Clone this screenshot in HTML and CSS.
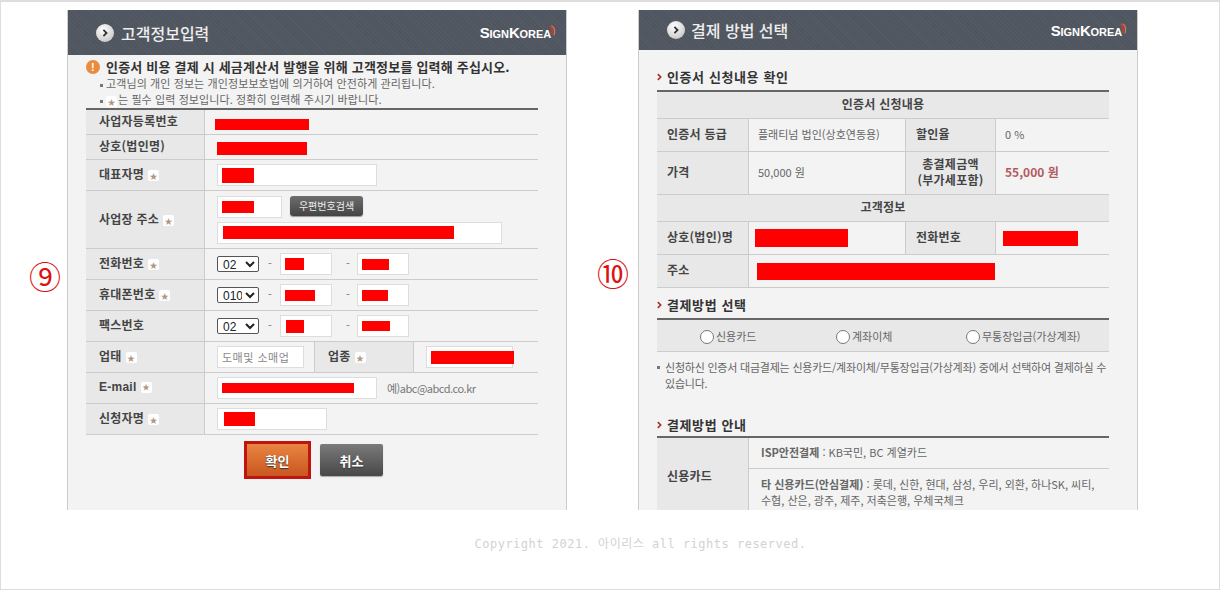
FILE: index.html
```html
<!DOCTYPE html>
<html lang="ko">
<head>
  <meta charset="UTF-8" />
  <title>고객정보입력 / 결제 방법 선택</title>
  <link rel="stylesheet" href="styles.css">
</head>
<body>
  <svg class="defs" width="0" height="0">
    <defs>
      <radialGradient id="knob" cx="40%" cy="30%" r="80%">
        <stop offset="0" stop-color="#ffffff"/>
        <stop offset="1" stop-color="#c4c4c4"/>
      </radialGradient>
      <symbol id="go" viewBox="0 0 18 18">
        <circle cx="9" cy="9" r="9" fill="url(#knob)"/>
        <path d="M7.4 5.8 10.6 9 7.4 12.2" fill="none" stroke="#333" stroke-width="1.8"/>
      </symbol>
      <symbol id="arc" viewBox="0 0 8 14">
        <path d="M0 1C4 2.5 5.5 6 4 12L2.6 11C3.6 7 2.6 3.6 0 2.4Z" fill="#c8402c"/>
        <path d="M3 1C7 3 8.5 7 6 13L5 12C6.6 7.5 5.4 3.6 2.4 1.8Z" fill="#e2705c"/>
      </symbol>
      <symbol id="chev" viewBox="0 0 6 9">
        <path d="M1 1 4.4 4.5 1 8" fill="none" stroke="#a5332f" stroke-width="2"/>
      </symbol>
    </defs>
  </svg>

  <div class="page">
    <div class="steps">
      <div class="step-no">⑨</div>

      <section class="panel">
        <header class="panel-head">
          <svg class="go"><use href="#go"/></svg>
          <h2>고객정보입력</h2>
          <div class="logo">SignKorea<svg class="arc"><use href="#arc"/></svg></div>
        </header>

        <div class="body-left">
          <div class="notice">
            <p class="notice-title"><span class="warn">!</span>인증서 비용 결제 시 세금계산서 발행을 위해 고객정보를 입력해 주십시오.</p>
            <p class="notice-line"><i class="dot"></i>고객님의 개인 정보는 개인정보보호법에 의거하여 안전하게 관리됩니다.</p>
            <p class="notice-line"><i class="dot"></i><span class="star">★</span>는 필수 입력 정보입니다. 정확히 입력해 주시기 바랍니다.</p>
          </div>

          <table class="form-table">
            <colgroup>
              <col class="c-label"><col class="c-biz"><col class="c-label2"><col>
            </colgroup>
            <tr class="h25">
              <th>사업자등록번호</th>
              <td colspan="3"><i class="red r-a"></i></td>
            </tr>
            <tr class="h25">
              <th>상호(법인명)</th>
              <td colspan="3"><i class="red r-b"></i></td>
            </tr>
            <tr>
              <th>대표자명<span class="star">★</span></th>
              <td colspan="3"><div class="field w160"><i class="red r-c"></i></div></td>
            </tr>
            <tr class="h58">
              <th>사업장 주소<span class="star">★</span></th>
              <td colspan="3">
                <div class="addr">
                  <div class="addr-top">
                    <div class="field w65"><i class="red r-d"></i></div>
                    <button class="zip-btn" type="button">우편번호검색</button>
                  </div>
                  <div class="field w285"><i class="red r-e"></i></div>
                </div>
              </td>
            </tr>
            <tr>
              <th>전화번호<span class="star">★</span></th>
              <td colspan="3">
                <div class="phone">
                  <select><option>02</option></select><span class="dash">-</span>
                  <div class="field w52"><i class="red r-f"></i></div><span class="dash d2">-</span>
                  <div class="field w52"><i class="red r-g"></i></div>
                </div>
              </td>
            </tr>
            <tr>
              <th>휴대폰번호<span class="star">★</span></th>
              <td colspan="3">
                <div class="phone">
                  <select><option>010</option></select><span class="dash">-</span>
                  <div class="field w52"><i class="red r-h"></i></div><span class="dash d2">-</span>
                  <div class="field w52"><i class="red r-i"></i></div>
                </div>
              </td>
            </tr>
            <tr>
              <th>팩스번호</th>
              <td colspan="3">
                <div class="phone">
                  <select><option>02</option></select><span class="dash">-</span>
                  <div class="field w52"><i class="red r-j"></i></div><span class="dash d2">-</span>
                  <div class="field w52"><i class="red r-k"></i></div>
                </div>
              </td>
            </tr>
            <tr>
              <th>업태<span class="star">★</span></th>
              <td><div class="field w87 typed">도매및 소매업</div></td>
              <th class="th-mid">업종<span class="star">★</span></th>
              <td class="td-mid"><div class="field w87"><i class="red r-l"></i></div></td>
            </tr>
            <tr>
              <th class="latin">E-mail<span class="star">★</span></th>
              <td colspan="3">
                <div class="mail">
                  <div class="field w160"><i class="red r-m"></i></div>
                  <span class="hint">예)abc@abcd.co.kr</span>
                </div>
              </td>
            </tr>
            <tr>
              <th>신청자명<span class="star">★</span></th>
              <td colspan="3"><div class="field w110"><i class="red r-n"></i></div></td>
            </tr>
          </table>

          <div class="actions">
            <button class="btn btn-ok" type="button">확인</button>
            <button class="btn btn-cancel" type="button">취소</button>
          </div>
        </div>
      </section>

      <div class="step-no step-no2">⑩</div>

      <section class="panel">
        <header class="panel-head head-right">
          <svg class="go"><use href="#go"/></svg>
          <h2>결제 방법 선택</h2>
          <div class="logo">SignKorea<svg class="arc"><use href="#arc"/></svg></div>
        </header>

        <div class="body-right">
          <h3 class="sec first"><svg class="chev"><use href="#chev"/></svg>인증서 신청내용 확인</h3>
          <table class="info-table">
            <colgroup>
              <col class="i-a"><col class="i-b"><col class="i-c"><col>
            </colgroup>
            <tr class="h27"><th colspan="4" class="center">인증서 신청내용</th></tr>
            <tr class="h33">
              <th>인증서 등급</th><td>플래티넘 법인(상호연동용)</td>
              <th>할인율</th><td>0 %</td>
            </tr>
            <tr class="h43">
              <th>가격</th><td>50,000 원</td>
              <th class="center">총결제금액<br>(부가세포함)</th><td class="sum">55,000 원</td>
            </tr>
            <tr class="h27"><th colspan="4" class="center">고객정보</th></tr>
            <tr class="h33">
              <th>상호(법인)명</th><td class="tight"><i class="red r-o"></i></td>
              <th>전화번호</th><td class="tight"><i class="red r-p"></i></td>
            </tr>
            <tr class="h33">
              <th>주소</th><td colspan="3" class="tight"><i class="red r-q"></i></td>
            </tr>
          </table>

          <h3 class="sec second"><svg class="chev"><use href="#chev"/></svg>결제방법 선택</h3>
          <div class="pay-row">
            <label><input type="radio" name="pay">신용카드</label>
            <label><input type="radio" name="pay">계좌이체</label>
            <label><input type="radio" name="pay">무통장입금(가상계좌)</label>
          </div>
          <p class="pay-note">신청하신 인증서 대금결제는 신용카드/계좌이체/무통장입금(가상계좌) 중에서 선택하여 결제하실 수 있습니다.</p>

          <h3 class="sec third"><svg class="chev"><use href="#chev"/></svg>결제방법 안내</h3>
          <table class="guide-table">
            <colgroup><col class="i-a"><col></colgroup>
            <tr class="h31">
              <th rowspan="2">신용카드</th>
              <td class="one-line"><b>ISP안전결제</b> : KB국민, BC 계열카드</td>
            </tr>
            <tr>
              <td class="two-line">
                <div><b>타 신용카드(안심결제)</b> : 롯데, 신한, 현대, 삼성, 우리, 외환, 하나SK, 씨티,</div>
                <div>수협, 산은, 광주, 제주, 저축은행, 우체국체크</div>
              </td>
            </tr>
          </table>
        </div>
      </section>
    </div>

    <footer class="copy">Copyright 2021. 아이리스 all rights reserved.</footer>
  </div>
</body>
</html>
```

FILE: styles.css
```css
* {
  box-sizing: border-box;
}

html, body {
  margin: 0;
  height: 100%;
}

body {
  font-family: "Noto Sans CJK KR", "Liberation Sans", sans-serif;
  font-size: 11px;
  color: #666;
  background-color: #fff;
  overflow: hidden;
}

.defs {
  display: block;
}

.page {
  height: 590px;
  border: 1px solid #ddd;
  border-top-width: 2px;
  padding-top: 8px;
}

.steps {
  display: flex;
  padding-left: 26px;
}

.step-no {
  width: 40px;
  margin-top: 250px;
  padding-left: 2px;
  font-family: "Liberation Serif", "Noto Sans CJK KR", serif;
  font-size: 32px;
  line-height: 36px;
  color: #d11;
}

.step-no2 {
  width: 41px;
  margin-left: 30px;
  margin-top: 247px;
  padding-left: 0;
}

.panel {
  width: 500px;
  height: 500px;
  overflow: hidden;
  background-color: #f3f3f3;
  border-left: 1px solid #ccc;
  border-right: 1px solid #ccc;
}

.panel-head {
  display: flex;
  align-items: center;
  height: 45px;
  padding: 0 10px 0 28px;
  color: #eee;
  background-color: #50565f;
  background-image: repeating-linear-gradient(45deg, rgba(255, 255, 255, 0.03) 0 1px, transparent 1px 3px);
}

.head-right {
  height: 40px;
}

.panel-head h2 {
  flex: 1;
  margin: 0 0 0 7px;
  font-size: 16px;
  font-weight: 500;
  line-height: 20px;
}

.head-right h2 {
  margin-left: 6px;
}

.go {
  width: 18px;
  height: 18px;
}

.logo {
  display: flex;
  align-items: flex-start;
  font-family: "Liberation Sans", sans-serif;
  font-size: 15px;
  font-weight: bold;
  font-variant: small-caps;
  letter-spacing: -0.1px;
  line-height: 15px;
  color: #fff;
}

.arc {
  width: 7px;
  height: 13px;
  margin-left: -2px;
  margin-top: -1px;
}

/* left form */
.body-left {
  padding-left: 18px;
}

.notice {
  height: 53px;
  padding-top: 4px;
}

.notice p {
  margin: 0;
  line-height: 16px;
}

.notice-title {
  display: flex;
  align-items: center;
  font-size: 13px;
  font-weight: 700;
  letter-spacing: 0.2px;
  color: #333;
}

.warn {
  width: 14px;
  height: 14px;
  margin-right: 6px;
  border-radius: 50%;
  background-color: #e98c3f;
  color: #fff;
  font-family: "Liberation Sans", sans-serif;
  font-size: 11px;
  line-height: 14px;
  text-align: center;
}

.notice-line {
  padding-left: 14px;
  letter-spacing: 0.1px;
  color: #666;
}

.dot {
  display: inline-block;
  width: 3px;
  height: 3px;
  margin-right: 3px;
  vertical-align: middle;
  background-color: #777;
}

.star {
  display: inline-block;
  width: 11px;
  height: 11px;
  margin-left: 4px;
  border-radius: 2px;
  background-color: #fff;
  color: #b3947c;
  font-size: 8px;
  font-weight: 400;
  line-height: 11px;
  text-align: center;
  vertical-align: middle;
}

.notice-line .star {
  margin-left: 0;
  margin-right: 1px;
}

table {
  border-collapse: separate;
  border-spacing: 0;
  table-layout: fixed;
  width: 452px;
  border-top: 2px solid #666;
}

th, td {
  padding: 0;
  border-bottom: 1px solid #ccc;
  text-align: left;
  font-weight: 400;
}

th {
  background-color: #e8e8e8;
  color: #444;
  font-size: 12px;
  font-weight: 700;
  letter-spacing: 0.25px;
}

.form-table th {
  padding-left: 13px;
  padding-bottom: 3px;
}

.form-table tr {
  height: 31px;
}

.form-table tr.h25 {
  height: 25px;
}

.form-table tr.h58 {
  height: 58px;
}

.form-table td {
  padding-left: 12px;
  border-left: 1px solid #ccc;
}

.c-label {
  width: 118px;
}

.c-biz {
  width: 110px;
}

.c-label2 {
  width: 99px;
}

.form-table .th-mid {
  padding-left: 13px;
  border-left: 1px solid #ccc;
}

.form-table .td-mid {
  padding-left: 12px;
}

.latin {
  font-family: "Liberation Sans", sans-serif;
}

.field {
  display: flex;
  align-items: center;
  height: 22px;
  padding-left: 4px;
  background-color: #fff;
  border: 1px solid #ddd;
  color: #888;
  line-height: 20px;
}

.w52 { width: 52px; }
.w65 { width: 65px; }
.w87 { width: 87px; }
.w110 { width: 110px; }
.w160 { width: 160px; }
.w285 { width: 285px; }

.typed {
  font-size: 11px;
  letter-spacing: 0.5px;
  white-space: nowrap;
}

.red {
  display: inline-block;
  background-color: #f00;
  vertical-align: middle;
}

.r-a { width: 94px; height: 11px; margin-left: -2px; }
.r-b { width: 90px; height: 13px; }
.r-c { width: 32px; height: 15px; }
.r-d { width: 32px; height: 12px; }
.r-e { width: 231px; height: 13px; margin-left: 1px; }
.r-f { width: 19px; height: 12px; }
.r-g { width: 27px; height: 11px; }
.r-h { width: 30px; height: 11px; }
.r-i { width: 26px; height: 11px; }
.r-j { width: 18px; height: 13px; margin-left: 1px; }
.r-k { width: 28px; height: 10px; }
.r-l { width: 83px; height: 13px; flex: none; }
.r-m { width: 132px; height: 10px; }
.r-n { width: 31px; height: 14px; margin-left: 2px; }

.addr {
  display: flex;
  flex-direction: column;
  gap: 4px;
}

.addr-top {
  display: flex;
  gap: 8px;
}

.zip-btn {
  width: 73px;
  height: 20px;
  padding: 0;
  border: 0;
  border-radius: 3px;
  background: linear-gradient(#6e6e6e, #444);
  box-shadow: 0 1px 1px #999;
  color: #eee;
  font-family: inherit;
  font-size: 10px;
  line-height: 18px;
}

.phone {
  display: flex;
  align-items: center;
}

.phone select {
  width: 42px;
  height: 16px;
  padding: 0 0 0 1px;
  background-color: #fff;
  border: 1px solid #555;
  border-radius: 2px;
  font-family: "Liberation Sans", sans-serif;
  font-size: 12px;
  color: #222;
}

.dash {
  width: 21px;
  margin-bottom: 3px;
  padding-left: 9px;
  color: #777;
  line-height: 12px;
}

.d2 {
  width: 25px;
  padding-left: 14px;
}

.mail {
  display: flex;
  align-items: center;
  gap: 10px;
}

.hint {
  color: #777;
  letter-spacing: -0.5px;
}

.actions {
  display: flex;
  align-items: center;
  gap: 9px;
  padding: 6px 0 0 158px;
}

.btn {
  padding: 0;
  border: 0;
  font-family: inherit;
  font-size: 13px;
  font-weight: 700;
  color: #fff;
  text-shadow: 0 1px 1px #333;
}

.btn-ok {
  width: 67px;
  height: 38px;
  border: 3px solid #c0140f;
  background: linear-gradient(#e98542, #c9561f);
}

.btn-cancel {
  width: 63px;
  height: 32px;
  border-radius: 2px;
  background: linear-gradient(#7a7a7a, #484848);
  box-shadow: 0 1px 1px #aaa;
}

/* right side */
.body-right {
  padding-left: 18px;
}

.sec {
  display: flex;
  align-items: center;
  gap: 5px;
  margin: 0 0 5px;
  font-size: 13px;
  font-weight: 700;
  line-height: 16px;
  color: #333;
  letter-spacing: 0.6px;
}

.sec.first {
  margin-top: 19px;
}

.sec.second {
  margin-top: 9px;
}

.sec.third {
  margin-top: 26px;
  margin-bottom: 3px;
}

.chev {
  width: 5px;
  height: 8px;
}

.info-table th,
.guide-table th {
  padding-left: 10px;
}

.info-table th,
.info-table td {
  padding-bottom: 3px;
}

.info-table td {
  padding-left: 9px;
  border-left: 1px solid #ccc;
}

.info-table td + th {
  border-left: 1px solid #ccc;
}

.info-table .tight {
  padding-left: 6px;
  padding-bottom: 1px;
}

.info-table th.center,
.center {
  padding-left: 0;
  text-align: center;
  line-height: 16px;
}

.i-a { width: 91px; }
.i-b { width: 157px; }
.i-c { width: 90px; }

.h27 { height: 27px; }
.h31 { height: 31px; }
.h33 { height: 33px; }
.h43 { height: 43px; }

.sum {
  color: #b25a60;
  font-size: 12px;
  font-weight: 700;
}

.r-o { width: 93px; height: 18px; }
.r-p { width: 75px; height: 15px; margin-left: 1px; }
.r-q { width: 238px; height: 17px; margin-left: 2px; }

.pay-row {
  display: grid;
  grid-template-columns: 136px 130px 1fr;
  align-items: center;
  width: 452px;
  height: 34px;
  padding-left: 43px;
  border-top: 2px solid #666;
  border-bottom: 1px solid #ccc;
  background-color: #e8e8e8;
}

.pay-row label {
  display: flex;
  align-items: center;
  gap: 2px;
}

.pay-row input {
  width: 14px;
  height: 14px;
  margin: 2px 0 0;
}

.pay-note {
  position: relative;
  margin: 7px 0 0;
  padding-left: 8px;
  width: 452px;
  line-height: 16px;
  letter-spacing: -0.22px;
}

.pay-note::before {
  content: "";
  position: absolute;
  left: 0;
  top: 7px;
  width: 3px;
  height: 3px;
  background-color: #777;
}

.guide-table td {
  padding-left: 12px;
  border-left: 1px solid #ccc;
  line-height: 16px;
}

.guide-table b {
  color: #666;
  font-weight: 700;
}

.one-line {
  padding-bottom: 2px;
}

.two-line {
  height: 44px;
  padding-top: 7px;
  vertical-align: top;
}

.copy {
  margin-top: 25px;
  text-align: center;
  font-family: "DejaVu Sans Mono", "Noto Sans CJK KR", monospace;
  font-size: 12px;
  line-height: 18px;
  letter-spacing: 0.5px;
  color: #d2d2d2;
  padding-left: 61px;
}
```
